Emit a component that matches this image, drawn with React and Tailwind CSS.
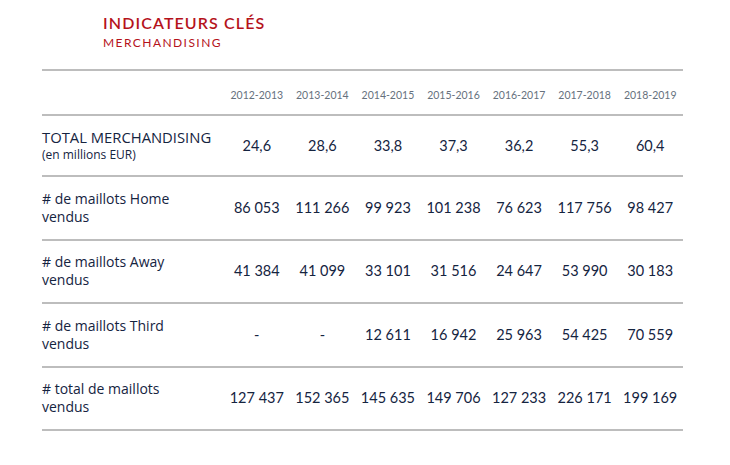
const years = ['2012-2013', '2013-2014', '2014-2015', '2015-2016', '2016-2017', '2017-2018', '2018-2019'];

const rows = [
  { label: ['# de maillots Home', 'vendus'], values: ['86 053', '111 266', '99 923', '101 238', '76 623', '117 756', '98 427'] },
  { label: ['# de maillots Away', 'vendus'], values: ['41 384', '41 099', '33 101', '31 516', '24 647', '53 990', '30 183'] },
  { label: ['# de maillots Third', 'vendus'], values: ['-', '-', '12 611', '16 942', '25 963', '54 425', '70 559'] },
  { label: ['# total de maillots', 'vendus'], values: ['127 437', '152 365', '145 635', '149 706', '127 233', '226 171', '199 169'] },
];

const grid = 'grid grid-cols-[182px_repeat(7,1fr)] items-center border-b-2 border-[#bdbdbd]';

export default function App() {
  return (
    <main className="h-[465px] w-[730px] bg-white font-['Lato',sans-serif] text-[#15243f]">
      <div className="pl-[103px] pt-[13px]">
        <h1 className="text-[16px] font-semibold leading-[20px] tracking-[0.07em] text-[#b5121b]">INDICATEURS CLÉS</h1>
        <p className="mt-[2px] text-[12px] leading-[16px] tracking-[0.12em] text-[#b5121b]">MERCHANDISING</p>
      </div>

      <section className="mx-[42px] mt-[18px] w-[641px] border-t-2 border-[#bdbdbd]">
        <div className={grid + ' h-[45px] pt-[6px]'}>
          <div />
          {years.map((y) => (
            <div key={y} className="text-center text-[10.5px] text-[#66717d]">{y}</div>
          ))}
        </div>

        <div className={grid + ' h-[61px]'}>
          <div className="font-['Open_Sans',sans-serif] leading-[18px]">
            <div className="whitespace-nowrap text-[14.8px]">TOTAL MERCHANDISING</div>
            <div className="text-[12px]">(en millions EUR)</div>
          </div>
          {['24,6', '28,6', '33,8', '37,3', '36,2', '55,3', '60,4'].map((v, i) => (
            <div key={i} className="text-center text-[14.5px]">{v}</div>
          ))}
        </div>

        {rows.map((r, idx) => (
          <div key={idx} className={grid + ' h-[63.5px]'}>
            <div className="font-['Open_Sans',sans-serif] text-[14px] leading-[18px]">
              <div>{r.label[0]}</div>
              <div>{r.label[1]}</div>
            </div>
            {r.values.map((v, i) => (
              <div key={i} className="text-center text-[14.5px]">{v}</div>
            ))}
          </div>
        ))}
      </section>
    </main>
  );
}
